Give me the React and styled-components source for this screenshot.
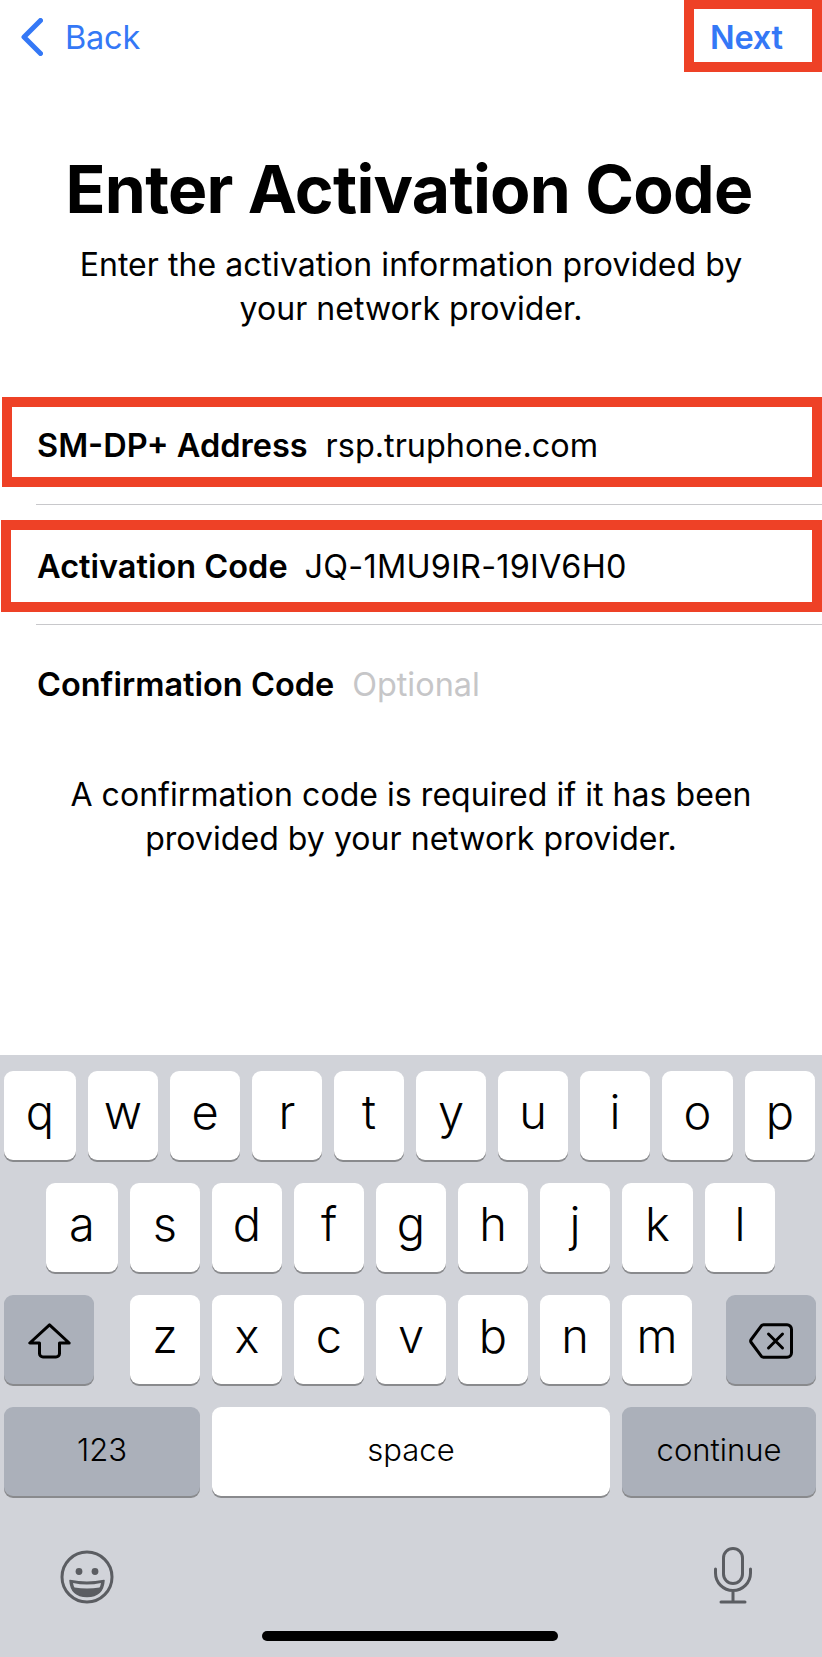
import React from 'react'
import styled, { createGlobalStyle } from 'styled-components'

const Global = createGlobalStyle`
  html, body {
    margin: 0;
    padding: 0;
    background: #fff;
  }
  body {
    font-family: Inter, 'Liberation Sans', sans-serif;
  }
`
const Page = styled.div`
  width: 822px;
  height: 1657px;
  display: flex;
  flex-direction: column;
  overflow: hidden;
  background: #fff;
  color: #000;
`
const Content = styled.div`
  flex: 1;
  display: flex;
  flex-direction: column;
`
const Nav = styled.div`
  height: 72px;
  display: flex;
  justify-content: space-between;
  align-items: flex-start;
`
const BackLink = styled.a`
  display: flex;
  align-items: center;
  gap: 22px;
  height: 74px;
  padding-left: 21px;
  color: #3478f6;
  font-size: 32.5px;
  letter-spacing: -0.2px;
`
const NextBox = styled.a`
  box-sizing: border-box;
  width: 138px;
  height: 72px;
  border: 10px solid #ee4126;
  border-top-width: 9px;
  padding-left: 16px;
  line-height: 57px;
  color: #3478f6;
  font-size: 32.5px;
  font-weight: 600;
  letter-spacing: -0.2px;
`
const Title = styled.h1`
  margin: 77px 0 0;
  padding-right: 4px;
  font-size: 66px;
  line-height: 80px;
  font-weight: 700;
  letter-spacing: -0.7px;
  text-align: center;
`
const Blurb = styled.p`
  margin: ${p => p.$top}px 0 0;
  font-size: 32px;
  line-height: 44px;
  letter-spacing: 0.05px;
  text-align: center;
`
const Form = styled.div`
  margin-top: 66px;
  display: flex;
  flex-direction: column;
`
const Highlight = styled.div`
  box-sizing: border-box;
  height: ${p => p.$h}px;
  margin-left: ${p => p.$x}px;
  padding-left: ${p => 25 + (2 - p.$x)}px;
  padding-top: ${p => p.$drop || 0}px;
  border: 10px solid #ee4126;
  display: flex;
  align-items: center;
  gap: ${p => p.$gap || 18}px;
`
const Plain = styled.div`
  height: 68px;
  padding-left: 37px;
  display: flex;
  align-items: center;
  gap: 18px;
`
const Label = styled.span`
  font-size: 32.5px;
  font-weight: 600;
`
const Value = styled.span`
  font-size: 32.4px;
  letter-spacing: ${p => p.$track || 0}px;
  color: ${p => (p.$muted ? '#c6c6c8' : '#000')};
`
const Divider = styled.div`
  height: 1px;
  margin: ${p => p.$top}px 0 ${p => p.$bottom}px 36px;
  background: #c8c8cb;
`
const Keyboard = styled.div`
  box-sizing: border-box;
  height: 602px;
  padding: 16px 6px 0 4px;
  display: flex;
  flex-direction: column;
  gap: 23px;
  background: #d1d3d9;
  position: relative;
`
const KeyRow = styled.div`
  display: flex;
  gap: 12px;
  padding-left: ${p => p.$indent || 0}px;
  justify-content: ${p => (p.$spread ? 'space-between' : 'flex-start')};
`
const KeyGroup = styled.div`
  display: flex;
  gap: 12px;
  margin-left: 2px;
`
const Key = styled.div`
  box-sizing: border-box;
  width: ${p => p.$w || 70}px;
  height: 89px;
  display: flex;
  align-items: center;
  justify-content: center;
  border-radius: 9px;
  background: ${p => (p.$dark ? '#abb0ba' : '#fff')};
  box-shadow: 0 2px 0 #898a8d;
  font-size: ${p => p.$size || 47}px;
  font-weight: 300;
  padding-bottom: ${p => (p.$size ? 5 : 8)}px;
`
const IconKey = styled(Key)`
  width: 90px;
  padding: 3px 0 0;
`
const BottomBar = styled.div`
  display: flex;
  justify-content: space-between;
  align-items: flex-end;
  padding: 28px 64px 0 56px;
`
const HomeBar = styled.div`
  position: absolute;
  left: 262px;
  top: 576px;
  width: 296px;
  height: 10px;
  border-radius: 5px;
  background: #000;
`

const Chevron = () => (
  <svg width="22" height="38" viewBox="0 0 22 38" fill="none">
    <path d="M19.5 2.5 L3 19 L19.5 35.5" stroke="#3478f6" strokeWidth="5" strokeLinecap="round" strokeLinejoin="round" />
  </svg>
)

const ShiftIcon = () => (
  <svg width="43" height="36" viewBox="0 0 43 36" fill="none">
    <path
      d="M21.5 1.8 L1.8 20 H11.5 V30.5 a3.5 3.5 0 0 0 3.5 3.5 H28 a3.5 3.5 0 0 0 3.5 -3.5 V20 H41.2 Z"
      stroke="#000"
      strokeWidth="3"
      strokeLinejoin="round"
    />
  </svg>
)

const DeleteIcon = () => (
  <svg width="44" height="36" viewBox="0 0 44 36" fill="none">
    <path
      d="M14.5 1.8 H38 a4.5 4.5 0 0 1 4.5 4.5 V29.7 a4.5 4.5 0 0 1 -4.5 4.5 H14.5 a3 3 0 0 1 -2.2 -1 L2.2 19.5 a2.5 2.5 0 0 1 0 -3 L12.3 2.8 a3 3 0 0 1 2.2 -1 Z"
      stroke="#000"
      strokeWidth="3"
      strokeLinejoin="round"
    />
    <path d="M19.5 11 L33.5 25 M33.5 11 L19.5 25" stroke="#000" strokeWidth="3" strokeLinecap="round" />
  </svg>
)

const EmojiIcon = () => (
  <svg width="54" height="54" viewBox="0 0 54 54" fill="none">
    <circle cx="27" cy="27" r="25" stroke="#5b5d62" strokeWidth="3" />
    <circle cx="19" cy="21.5" r="3.4" fill="#5b5d62" />
    <circle cx="35" cy="21.5" r="3.4" fill="#5b5d62" />
    <path d="M10 30.5 Q27 34 44 30.5 Q43 46.5 27 46.5 Q11 46.5 10 30.5 Z" fill="#5b5d62" stroke="#5b5d62" strokeWidth="1.5" strokeLinejoin="round" />
    <path d="M13 33 Q27 36 41 33 Q40.5 36 39.5 37.5 Q27 39.5 14.5 37.5 Q13.5 36 13 33 Z" fill="#d1d3d9" />
  </svg>
)

const MicIcon = () => (
  <svg width="38" height="57" viewBox="0 0 38 57" fill="none">
    <rect x="9.5" y="1.5" width="19" height="35" rx="9.5" stroke="#5b5d62" strokeWidth="3" />
    <path d="M1.5 22 V26 a17.5 17.5 0 0 0 35 0 V22 M19 43.5 V54.5 M7 55 H31" stroke="#5b5d62" strokeWidth="3" strokeLinecap="round" />
  </svg>
)

const letters = s => s.split('')
const wideKeys = { q: 72, a: 72, o: 71, k: 71 }

const App = () => (
  <Page>
    <Global />
    <Content>
      <Nav>
        <BackLink><Chevron />Back</BackLink>
        <NextBox>Next</NextBox>
      </Nav>
      <Title>Enter Activation Code</Title>
      <Blurb $top={14}>
        Enter the activation information provided by
        <br />
        your network provider.
      </Blurb>
      <Form>
        <Highlight $x={2} $h={90} $drop={6}>
          <Label>SM-DP+ Address</Label>
          <Value>rsp.truphone.com</Value>
        </Highlight>
        <Divider $top={17} $bottom={15} />
        <Highlight $x={1} $h={92} $gap={17}>
          <Label>Activation Code</Label>
          <Value $track={0.25}>JQ-1MU9IR-19IV6H0</Value>
        </Highlight>
        <Divider $top={12} $bottom={25} />
        <Plain>
          <Label>Confirmation Code</Label>
          <Value $muted>Optional</Value>
        </Plain>
      </Form>
      <Blurb $top={55}>
        A confirmation code is required if it has been
        <br />
        provided by your network provider.
      </Blurb>
    </Content>
    <Keyboard>
      <KeyRow>
        {letters('qwertyuiop').map(k => <Key key={k} $w={wideKeys[k]}>{k}</Key>)}
      </KeyRow>
      <KeyRow $indent={42}>
        {letters('asdfghjkl').map(k => <Key key={k} $w={wideKeys[k]}>{k}</Key>)}
      </KeyRow>
      <KeyRow $spread>
        <IconKey $dark><ShiftIcon /></IconKey>
        <KeyGroup>
          {letters('zxcvbnm').map(k => <Key key={k}>{k}</Key>)}
        </KeyGroup>
        <IconKey $dark><DeleteIcon /></IconKey>
      </KeyRow>
      <KeyRow>
        <Key $dark $w={196} $size={31}>123</Key>
        <Key $w={398} $size={31}>space</Key>
        <Key $dark $w={194} $size={31}>continue</Key>
      </KeyRow>
      <BottomBar>
        <EmojiIcon />
        <MicIcon />
      </BottomBar>
      <HomeBar />
    </Keyboard>
  </Page>
)

export default App
